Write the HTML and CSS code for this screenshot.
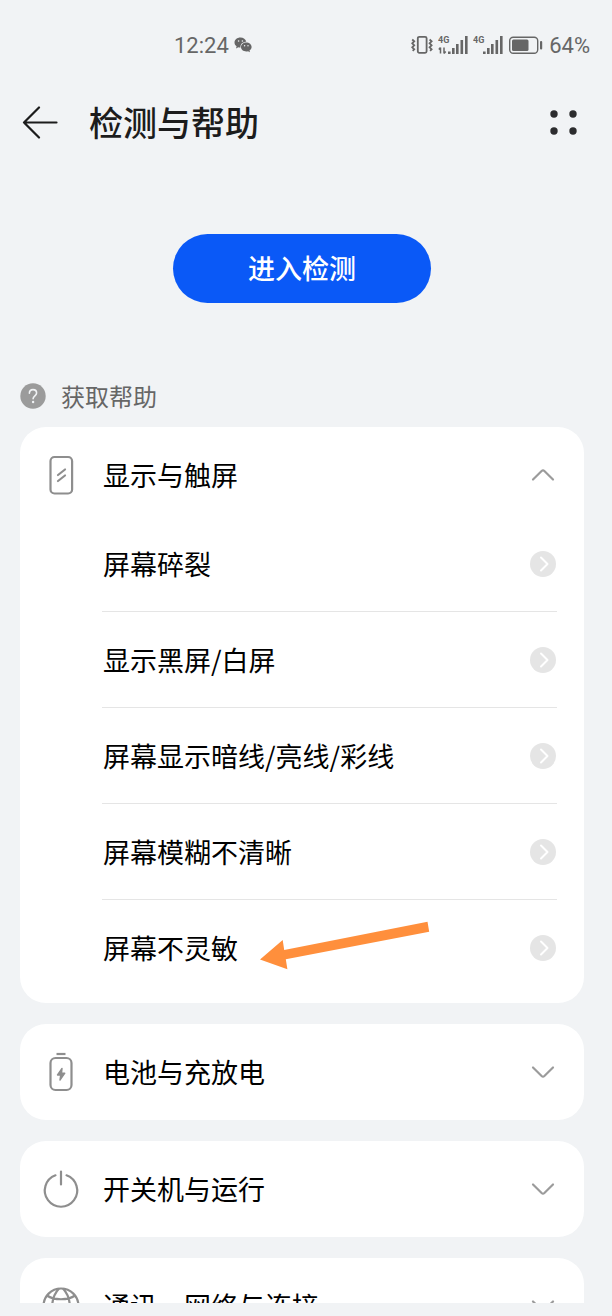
FILE: index.html
```html
<!DOCTYPE html>
<html lang="zh-CN">
<head>
<meta charset="utf-8">
<meta name="viewport" content="width=device-width, initial-scale=1">
<title>检测与帮助</title>
<link rel="stylesheet" href="styles.css">
</head>
<body>
<svg class="sprite" aria-hidden="true">
  <symbol id="go" viewBox="0 0 26 26">
    <circle cx="13" cy="13" r="13" fill="#e5e5e5"/>
    <path d="M11 6.500l6.500 6.500-6.500 6.500" fill="none" stroke="#fff" stroke-width="2" stroke-linecap="round" stroke-linejoin="round"/>
  </symbol>
  <symbol id="down" viewBox="0 0 26 26">
    <path d="M3 8.500l8.600 8.500q1.400 1.200 2.800 0L23 8.500" fill="none" stroke="#9b9b9b" stroke-width="2.200" stroke-linecap="round"/>
  </symbol>
  <symbol id="up" viewBox="0 0 26 26">
    <path d="M3 17.500L11.600 9q1.400-1.200 2.800 0L23 17.500" fill="none" stroke="#9b9b9b" stroke-width="2.200" stroke-linecap="round"/>
  </symbol>
</svg>

<div class="status">
  <div class="status-group">
    <span>12:24</span>
    <svg width="18" height="16" viewBox="0 0 18 16" fill="#666">
      <path d="M6.500.5C3 .5.500 2.700.5 5.500c0 1.600.8 2.900 2.100 3.800L2 11.500l2.400-1.200c.7.200 1.400.3 2.100.2C6 7 9 4.700 12.300 4.700 11.700 2.200 9.400.5 6.500.5z"/>
      <path d="M12.300 5.600c-3 0-5.300 1.900-5.300 4.400s2.300 4.400 5.300 4.400c.6 0 1.200-.1 1.700-.2l2 1-.5-1.800c1.300-.8 2.100-2 2.100-3.400 0-2.500-2.300-4.400-5.300-4.400z"/>
      <g fill="#f1f3f5"><circle cx="4.600" cy="4" r=".8"/><circle cx="8.400" cy="4" r=".8"/><circle cx="10.600" cy="8.800" r=".7"/><circle cx="14" cy="8.800" r=".7"/></g>
    </svg>
  </div>
  <div class="status-group">
    <svg width="22" height="20" viewBox="0 0 22 20" fill="none" stroke="#666" stroke-width="1.800">
      <rect x="6.800" y="1.800" width="8.800" height="16" rx="1.500"/>
      <path d="M1.200 4.500l2 1.800-2 2 2 2-2 2 2 2-1.500 1.500M18.600 4.500l2 1.800-2 2 2 2-2 2 2 2-1.500 1.500"/>
    </svg>
    <svg class="signal" width="30" height="20" viewBox="0 0 30 20" fill="#666">
      <text class="net" x="0" y="8">4G</text>
      <path d="M2.500 12.500v6M.8 14.500l1.700-2M6 12.500v6M7.700 16.500l-1.700 2" fill="none" stroke="#666" stroke-width="1.500"/>
      <rect x="10" y="16.500" width="2.600" height="2.500"/><rect x="14" y="13" width="2.600" height="6"/><rect x="18" y="9" width="2.600" height="10"/><rect x="22.500" y="5" width="2.600" height="14"/><rect x="27" y="1" width="2.600" height="18"/>
    </svg>
    <svg class="signal" width="30" height="20" viewBox="0 0 30 20" fill="#666">
      <text class="net" x="0" y="8">4G</text>
      <rect x="10" y="16.500" width="2.600" height="2.500"/><rect x="14" y="13" width="2.600" height="6"/><rect x="18" y="9" width="2.600" height="10"/><rect x="22.500" y="5" width="2.600" height="14"/><rect x="27" y="1" width="2.600" height="18"/>
    </svg>
    <svg width="36" height="20" viewBox="0 0 36 20">
      <rect x="1.700" y="2.200" width="28" height="16" rx="3.500" fill="none" stroke="#666" stroke-width="1.400"/>
      <rect x="4" y="4.500" width="16.500" height="11.500" rx="1.500" fill="#666"/>
      <rect x="32" y="6" width="2.200" height="8.500" rx="1" fill="#666"/>
    </svg>
    <span>64%</span>
  </div>
</div>

<header class="topbar">
  <button class="icon-button" type="button" aria-label="返回">
    <svg width="36" height="34" viewBox="0 0 36 34" fill="none" stroke="#1c1c1c" stroke-width="2.200" stroke-linecap="round" stroke-linejoin="round"><path d="M34.500 16.500H2M17 1.500l-15 15 15 15"/></svg>
  </button>
  <h1 class="title">检测与帮助</h1>
  <button class="icon-button" type="button" aria-label="更多">
    <svg width="28" height="26" viewBox="0 0 28 26" fill="#2c2c2e"><circle cx="4" cy="4" r="3.700"/><circle cx="23" cy="4" r="3.700"/><circle cx="4" cy="21" r="3.700"/><circle cx="23" cy="21" r="3.700"/></svg>
  </button>
</header>

<main class="content">
  <button class="primary" type="button">进入检测</button>

  <h2 class="section">
    <svg width="26" height="26" viewBox="0 0 26 26"><circle cx="13" cy="13" r="12.700" fill="#9b9b9b"/><path d="M9.400 10.300c0-2.200 1.500-3.700 3.600-3.700s3.600 1.400 3.600 3.400c0 2.700-3.500 2.900-3.500 5.700" fill="none" stroke="#f1f3f5" stroke-width="1.600" stroke-linecap="round"/><circle cx="13.100" cy="19" r="1.200" fill="#f1f3f5"/></svg>
    获取帮助
  </h2>

  <section class="card">
    <button class="card-head" type="button" aria-expanded="true">
      <svg class="card-icon" viewBox="0 0 40 40" fill="none" stroke="#8e8e8e" stroke-width="2.200" stroke-linecap="round"><rect x="9.500" y="2" width="21.600" height="36.500" rx="4"/><path d="M17 20l7-5.500M17 26l7-5.500"/></svg>
      <span class="label">显示与触屏</span>
      <svg class="mark"><use href="#up"/></svg>
    </button>
    <ul class="topics">
      <li class="topic"><a class="topic-link" href="#"><span class="label">屏幕碎裂</span><svg class="mark"><use href="#go"/></svg></a></li>
      <li class="topic"><a class="topic-link" href="#"><span class="label">显示黑屏/白屏</span><svg class="mark"><use href="#go"/></svg></a></li>
      <li class="topic"><a class="topic-link" href="#"><span class="label">屏幕显示暗线/亮线/彩线</span><svg class="mark"><use href="#go"/></svg></a></li>
      <li class="topic"><a class="topic-link" href="#"><span class="label">屏幕模糊不清晰</span><svg class="mark"><use href="#go"/></svg></a></li>
      <li class="topic"><a class="topic-link" href="#"><span class="label">屏幕不灵敏</span><svg class="mark"><use href="#go"/></svg></a>
        <svg class="pointer" width="170" height="50" viewBox="0 0 170 50" aria-hidden="true"><path d="M0 38.500L22.700 19l1.500 10L167.500.700l1.700 10L25.800 38.300l1.600 10z" fill="#ff8f3c"/></svg>
      </li>
    </ul>
  </section>

  <section class="card">
    <button class="card-head" type="button" aria-expanded="false">
      <svg class="card-icon" viewBox="0 0 40 40" fill="none" stroke="#8e8e8e" stroke-width="2.200"><rect x="9.500" y="6" width="21" height="32" rx="5"/><path d="M15.500 2h9"/><path d="M21 16.500l-4.500 6.500h3.200l-.7 5 4.800-6.800h-3.300z" fill="#8e8e8e" stroke-width="1.400" stroke-linejoin="round"/></svg>
      <span class="label">电池与充放电</span>
      <svg class="mark"><use href="#down"/></svg>
    </button>
  </section>

  <section class="card">
    <button class="card-head" type="button" aria-expanded="false">
      <svg class="card-icon" viewBox="0 0 40 40" fill="none" stroke="#8e8e8e" stroke-width="2.200" stroke-linecap="round"><path d="M20 2.500v13M14.500 6.300a16.200 16.200 0 1 0 11 0"/></svg>
      <span class="label">开关机与运行</span>
      <svg class="mark"><use href="#down"/></svg>
    </button>
  </section>

  <section class="card">
    <button class="card-head" type="button" aria-expanded="false">
      <svg class="card-icon" viewBox="0 0 40 40" fill="none" stroke="#8e8e8e" stroke-width="2.200"><circle cx="20" cy="20" r="17.500"/><path d="M18 2.500c-9 10-9 25 0 35M22 2.500c9 10 9 25 0 35M6 9.500c7 5 21 5 28 0M6 30.500c7-5 21-5 28 0M2.500 20h35"/></svg>
      <span class="label">通讯、网络与连接</span>
      <svg class="mark"><use href="#down"/></svg>
    </button>
  </section>
</main>
</body>
</html>
```
FILE: styles.css
```css
* {
  box-sizing: border-box;
}

body {
  display: flex;
  flex-direction: column;
  height: 100vh;
  margin: 0;
  padding-bottom: 13px;
  background: #f1f3f5;
  color: #000;
  font-family: "Noto Sans CJK SC", sans-serif;
}

button {
  padding: 0;
  border: 0;
  background: none;
  color: inherit;
  font: inherit;
}

svg {
  display: block;
  flex: none;
}

.sprite {
  position: absolute;
  width: 0;
  height: 0;
}

.status {
  display: flex;
  flex: none;
  justify-content: space-between;
  height: 90px;
  padding: 0 22px 0 174px;
  color: #666;
  font-family: Roboto, sans-serif;
  font-size: 22px;
}

.status-group {
  display: flex;
  align-items: center;
  gap: 5px;
}

.net {
  font-size: 9px;
  font-weight: 700;
}

.topbar {
  display: flex;
  flex: none;
  align-items: center;
  height: 66px;
  padding: 0 34px 0 22px;
}

.title {
  flex: 1;
  margin: 0 0 0 31px;
  padding-bottom: 2px;
  font-size: 34px;
  font-weight: 500;
  line-height: 48px;
  color: #1c1c1c;
}

.content {
  display: flex;
  flex: 1;
  flex-direction: column;
  gap: 21px;
  min-height: 0;
  padding: 78px 28px 0 20px;
  overflow-y: auto;
  scrollbar-width: none;
}

.primary {
  flex: none;
  align-self: center;
  width: 258px;
  height: 69px;
  padding-bottom: 2px;
  border-radius: 35px;
  background: #0a59f7;
  color: #fff;
  font-size: 27px;
  font-weight: 500;
}

.section {
  display: flex;
  flex: none;
  align-items: center;
  gap: 15px;
  margin: 54px 0 0;
  font-size: 24px;
  font-weight: 400;
  line-height: 36px;
  color: #666;
}

.card {
  flex: none;
  padding: 8px 27px 8px 21px;
  border-radius: 26px;
  background: #fff;
  font-size: 27px;
  line-height: 40px;
}

.section + .card {
  margin-top: -8px;
}

.card-head {
  display: flex;
  align-items: center;
  gap: 22px;
  width: 100%;
  height: 80px;
  text-align: left;
}

.card-icon {
  width: 40px;
  height: 40px;
}

.label {
  flex: 1;
}

.mark {
  width: 26px;
  height: 26px;
  margin-right: 1px;
}

.topics {
  margin: 0 0 0 61px;
  padding: 0;
  list-style: none;
}

.topic {
  position: relative;
  border-top: 1px solid #e5e5e5;
}

.topic:first-child {
  border-top-color: transparent;
}

.topic-link {
  display: flex;
  align-items: center;
  height: 95px;
  padding-left: 1px;
  color: inherit;
  text-decoration: none;
}

.pointer {
  position: absolute;
  top: 21px;
  left: 158px;
}
```
